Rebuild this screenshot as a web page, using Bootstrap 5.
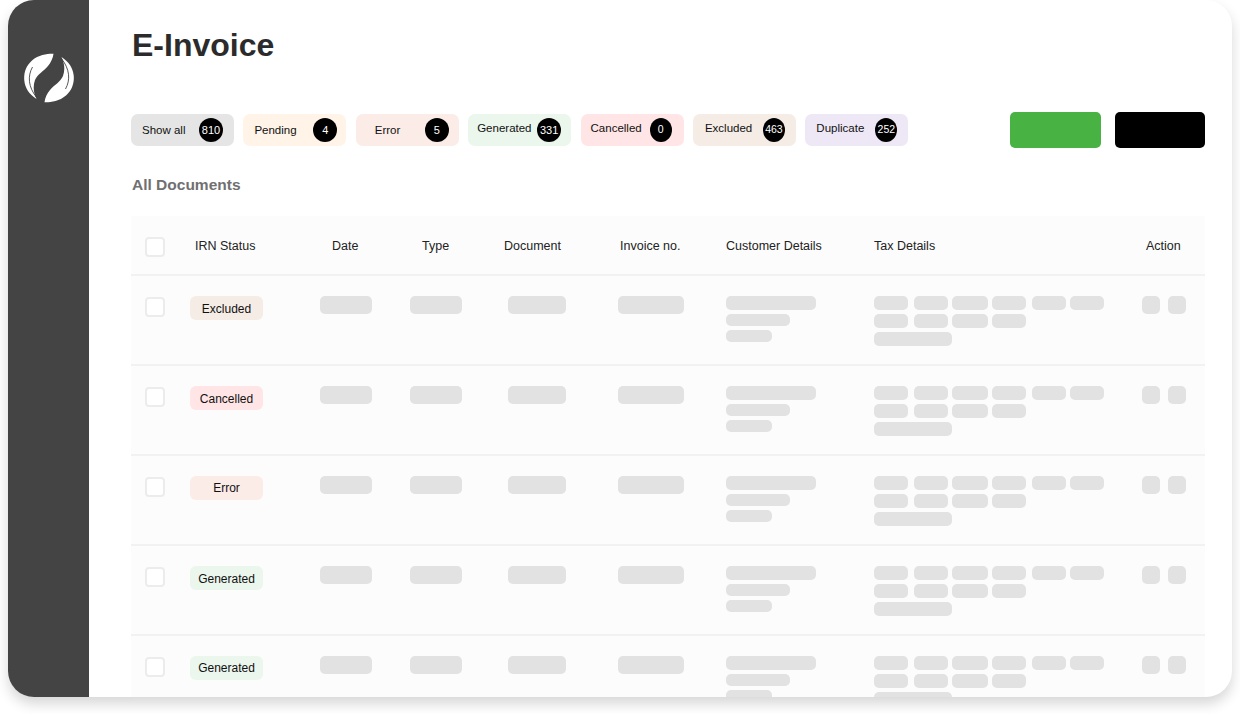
<!DOCTYPE html>
<html lang="en">
<head>
    <meta charset="UTF-8">
    <meta name="viewport" content="width=device-width, initial-scale=1.0">
    <title>E-Invoice</title>
    <link rel="stylesheet" href="https://cdn.jsdelivr.net/npm/bootstrap@5.3.0/dist/css/bootstrap.min.css">
    <style>
        html, body {
            height: 100%;
            overflow: hidden;
        }

        body {
            background-color: #fff;
            color: #111;
            font-family: "Liberation Sans", Arial, sans-serif;
        }

        .app-frame {
            height: 697px;
            margin: 0 8px;
            border-radius: 26px;
            background-color: #fff;
            box-shadow: 0 7px 13px rgba(0, 0, 0, 0.16);
            overflow: hidden;
        }

        .side-rail {
            width: 81px;
            flex: none;
            padding-top: 53px;
            background-color: #444;
        }

        .main-area {
            min-width: 0;
            padding: 0 27px 0 42px;
        }

        .page-title {
            margin: 0 0 0 1px;
            padding-top: 27px;
            font-size: 32px;
            line-height: 37px;
            font-weight: 700;
            color: #2b2b2b;
        }

        .filter-bar {
            height: 36px;
            margin-top: 48px;
        }

        .filter-chip {
            height: 32px;
            width: 103px;
            margin-top: 2px;
            margin-right: 9.4px;
            border-radius: 7px;
            font-size: 11.5px;
        }

        .filter-count {
            width: 24px;
            height: 24px;
            border-radius: 50%;
            background-color: #000;
            color: #fff;
            font-size: 11px;
        }

        .count-narrow { width: 22px; font-size: 10.5px; }
        .text-low { padding-top: 2px; }
        .text-high { padding-bottom: 2px; }

        .tint-all { background-color: #e5e5e5; padding: 0 11px; }
        .tint-pending { background-color: #fff4e7; padding: 0 9px 0 11px; }
        .tint-error { background-color: #fbece8; padding: 0 10px 0 19px; }
        .tint-generated { background-color: #ebf6ec; padding: 0 10px 0 9px; }
        .tint-cancelled { background-color: #ffe5e5; padding: 0 12px 0 10px; }
        .tint-excluded { background-color: #f5ece6; padding: 0 11px 0 12px; }
        .tint-duplicate { background-color: #eee7f6; padding: 0 11px; }

        .action-green,
        .action-black {
            width: 91px;
            height: 36px;
            border: 0;
            border-radius: 5px;
        }

        .action-green { background-color: #48b343; }
        .action-black { width: 90px; margin-left: 14px; background-color: #000; }

        .section-label {
            margin: 28px 0 0 1px;
            font-size: 15.5px;
            line-height: 18px;
            font-weight: 700;
            color: #707070;
        }

        .doc-table {
            margin-top: 22px;
            background-color: #fcfcfc;
        }

        .doc-row {
            display: grid;
            grid-template-columns: 45px 130px 90px 98px 110px 108px 148px 268px 63px;
            padding-left: 14px;
            border-bottom: 2px solid #f2f2f2;
        }

        .doc-head {
            height: 60px;
            padding-top: 3px;
            align-items: center;
            font-size: 12.5px;
            color: #222;
        }

        .doc-body {
            height: 90px;
            padding-top: 20px;
        }

        .tick-box {
            width: 20px;
            height: 20px;
            border: 2px solid #ececec;
            border-radius: 4px;
            background-color: #fff;
        }

        .doc-body .tick-box { margin-top: 1px; }

        .head-status { padding-left: 5px; }
        .head-date { padding-left: 12px; }
        .head-type { padding-left: 12px; }
        .head-doc { margin-left: -4px; }
        .head-inv { padding-left: 2px; }
        .head-action { padding-left: 4px; }

        .status-tag {
            width: 73px;
            height: 24px;
            border-radius: 6px;
            font-size: 12px;
        }

        .tag-low { padding-top: 1px; }

        .stub {
            display: block;
            height: 14px;
            border-radius: 5px;
            background-color: #e2e2e2;
        }

        .stub-tall { height: 18px; }
        .stub-thin { height: 12px; }
        .stub-stack { row-gap: 4px; }
        .stub-gap-l { margin-right: 6px; }
        .stub-gap-s { margin-right: 4px; }
    </style>
</head>
<body>

    <div class="app-frame d-flex">
        <div class="side-rail d-flex justify-content-center">
            <svg width="50" height="50" viewBox="0 0 50 50" aria-label="Logo">
                <g id="leaf">
                    <path fill="#fff" d="M29.5 .8C24 .6 15 1.5 8 7.5 1.5 13 -.4 21 .3 27.5 1 35 5 41 12.5 46 9.5 40 8.8 33 11 27 13.5 21 20 18 24 13 27 9.5 29 5 29.5 .8Z"/>
                    <path fill="none" stroke="#444" stroke-width=".9" d="M8.5 14C3.5 23 4 34 13 45"/>
                </g>
                <use href="#leaf" transform="rotate(180 25 25)"/>
            </svg>
        </div>

        <div class="main-area flex-grow-1">
            <h1 class="page-title">E-Invoice</h1>

            <div class="filter-bar d-flex">
                <div class="filter-chip tint-all d-flex align-items-center justify-content-between"><span class="text-low">Show all</span><span class="filter-count d-flex align-items-center justify-content-center">810</span></div>
                <div class="filter-chip tint-pending d-flex align-items-center justify-content-between"><span class="text-low">Pending</span><span class="filter-count d-flex align-items-center justify-content-center">4</span></div>
                <div class="filter-chip tint-error d-flex align-items-center justify-content-between"><span class="text-low">Error</span><span class="filter-count d-flex align-items-center justify-content-center">5</span></div>
                <div class="filter-chip tint-generated d-flex align-items-center justify-content-between"><span class="text-high">Generated</span><span class="filter-count d-flex align-items-center justify-content-center">331</span></div>
                <div class="filter-chip tint-cancelled d-flex align-items-center justify-content-between"><span class="text-high">Cancelled</span><span class="filter-count count-narrow d-flex align-items-center justify-content-center">0</span></div>
                <div class="filter-chip tint-excluded d-flex align-items-center justify-content-between"><span class="text-high">Excluded</span><span class="filter-count count-narrow d-flex align-items-center justify-content-center">463</span></div>
                <div class="filter-chip tint-duplicate d-flex align-items-center justify-content-between"><span class="text-high">Duplicate</span><span class="filter-count count-narrow d-flex align-items-center justify-content-center">252</span></div>
                <button type="button" class="action-green ms-auto" aria-label="Primary action"></button>
                <button type="button" class="action-black" aria-label="Secondary action"></button>
            </div>

            <div class="section-label">All Documents</div>

            <div class="doc-table" id="docTable">
                <div class="doc-row doc-head">
                    <div><div class="tick-box"></div></div>
                    <div class="head-status">IRN Status</div>
                    <div class="head-date">Date</div>
                    <div class="head-type">Type</div>
                    <div class="head-doc">Document</div>
                    <div class="head-inv">Invoice no.</div>
                    <div>Customer Details</div>
                    <div>Tax Details</div>
                    <div class="head-action">Action</div>
                </div>
            </div>
        </div>
    </div>

    <script>
        const docTable = document.getElementById('docTable');

        const rows = [
            { label: 'Excluded', tint: '#f5ece6', low: true },
            { label: 'Cancelled', tint: '#ffe5e5', low: true },
            { label: 'Error', tint: '#fbece8', low: false },
            { label: 'Generated', tint: '#ebf6ec', low: true },
            { label: 'Generated', tint: '#ebf6ec', low: false },
        ];

        function stub(width, extra = '') {
            return `<span class="stub ${extra}" style="width: ${width}px"></span>`;
        }

        const taxLines = `
            <div class="d-flex">
                ${stub(34, 'stub-gap-l')}${stub(34, 'stub-gap-s')}${stub(36, 'stub-gap-s')}${stub(34, 'stub-gap-l')}${stub(34, 'stub-gap-s')}${stub(34)}
            </div>
            <div class="d-flex">
                ${stub(34, 'stub-gap-l')}${stub(34, 'stub-gap-s')}${stub(36, 'stub-gap-s')}${stub(34)}
            </div>
            <div class="d-flex">${stub(78)}</div>
        `;

        rows.forEach(r => {
            const row = document.createElement('div');
            row.className = 'doc-row doc-body';
            row.innerHTML = `
                <div><div class="tick-box"></div></div>
                <div><span class="status-tag d-flex align-items-center justify-content-center ${r.low ? 'tag-low' : ''}" style="background-color: ${r.tint}">${r.label}</span></div>
                <div>${stub(52, 'stub-tall')}</div>
                <div>${stub(52, 'stub-tall')}</div>
                <div>${stub(58, 'stub-tall')}</div>
                <div>${stub(66, 'stub-tall')}</div>
                <div class="d-flex flex-column stub-stack">${stub(90)}${stub(64, 'stub-thin')}${stub(46, 'stub-thin')}</div>
                <div class="d-flex flex-column stub-stack">${taxLines}</div>
                <div class="d-flex gap-2 align-items-start">${stub(18, 'stub-tall')}${stub(18, 'stub-tall')}</div>
            `;
            docTable.appendChild(row);
        });
    </script>
    <script src="https://cdn.jsdelivr.net/npm/bootstrap@5.3.0/dist/js/bootstrap.bundle.min.js"></script>
</body>
</html>
